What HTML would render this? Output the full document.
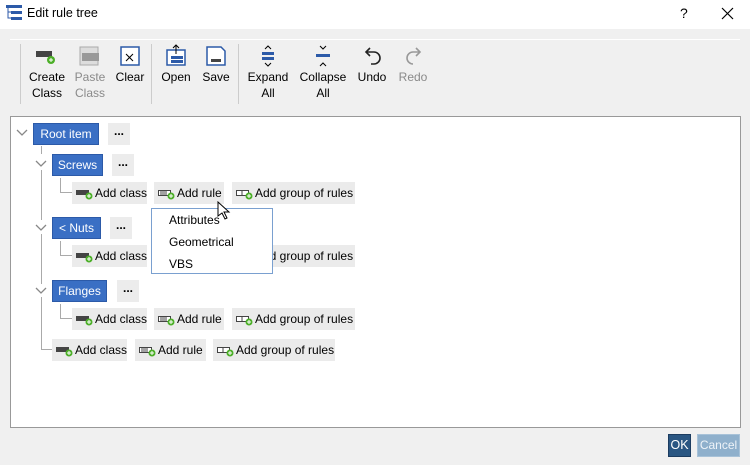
<!DOCTYPE html>
<html><head><style>
*{margin:0;padding:0;box-sizing:border-box}
body{width:750px;height:465px;background:#f0f0f0;font-family:"Liberation Sans",sans-serif;font-size:12px;color:#000;position:relative;overflow:hidden}
.a{position:absolute;white-space:nowrap}
.title{left:0;top:0;width:750px;height:29px;background:#fff}
.tb{text-align:center;font-size:12px;line-height:16px;width:50px;margin-left:-25px;top:69px}
.dis{color:#8a8a8a}
.sep{width:1px;background:#ccc;top:44px;height:60px}
.node{background:#3a6fc4;color:#fff;border:1px solid #2c5aa8;height:22px;line-height:20px;text-align:center;font-size:12px}
.dots{background:#ececec;height:22px;width:22px;text-align:center;line-height:16px;font-weight:bold}
.btn{background:#ebebeb;height:22px;line-height:22px;padding-left:23px;font-size:12px;overflow:hidden}
.btn svg{position:absolute;left:4px;top:6px}
.ln{border-left:1px solid #aaa;border-bottom:1px solid #aaa}
.vl{border-left:1px solid #aaa}
</style></head><body>
<div class="a title"></div>
<svg class="a" style="left:6px;top:5px" width="18" height="16"><rect x="0" y="0" width="16" height="3" fill="#2c5aa8"/><rect x="5" y="6" width="11" height="3" fill="#2c5aa8"/><rect x="5" y="12" width="11" height="3" fill="#2c5aa8"/><path d="M2 3v10h3M2 7h3" stroke="#2c5aa8" fill="none"/></svg>
<div class="a" style="left:27px;top:6px;font-size:12.5px">Edit rule tree</div>
<div class="a" style="left:680px;top:5px;font-size:14px">?</div>
<svg class="a" style="left:721px;top:7px" width="13" height="13"><path d="M1 1L12 12M12 1L1 12" stroke="#000" stroke-width="1.2"/></svg>
<div class="a" style="left:10px;top:39px;width:730px;height:1px;background:#fff"></div>
<div class="a sep" style="left:20px"></div>
<div class="a sep" style="left:151px"></div>
<div class="a sep" style="left:238px"></div>
<svg class="a" style="left:35px;top:49px" width="22" height="16"><rect x="1" y="2" width="16" height="6" fill="#444"/><circle cx="16" cy="11" r="4" fill="#4caf28"/><path d="M16 9v4M14 11h4" stroke="#fff"/></svg>
<svg class="a" style="left:79px;top:46px" width="22" height="20"><rect x="1" y="1" width="18" height="18" fill="#ddd" stroke="#aaa"/><rect x="3" y="7" width="17" height="8" fill="#999"/></svg>
<svg class="a" style="left:120px;top:46px" width="20" height="20"><rect x="1" y="1" width="18" height="18" fill="#fff" stroke="#2c5aa8" stroke-width="1.5"/><path d="M6 8l7 7M13 8l-7 7" stroke="#000"/></svg>
<svg class="a" style="left:166px;top:44px" width="20" height="22"><rect x="1" y="6" width="18" height="15" fill="#fff" stroke="#2c5aa8" stroke-width="1.5"/><path d="M10 1v9M7 4l3-3 3 3" stroke="#000" fill="none"/><rect x="5" y="12" width="12" height="3" fill="#2c5aa8"/><rect x="5" y="16" width="12" height="3" fill="#2c5aa8"/></svg>
<svg class="a" style="left:206px;top:46px" width="20" height="20"><path d="M1 1h14l4 4v14H1z" fill="#fff" stroke="#2c5aa8" stroke-width="1.5"/><rect x="5" y="13" width="10" height="3" fill="#444"/></svg>
<svg class="a" style="left:260px;top:45px" width="16" height="22"><path d="M5 4l3-3 3 3M5 18l3 3 3-3" stroke="#000" fill="none"/><rect x="2" y="7" width="12" height="3" fill="#2c5aa8"/><rect x="2" y="12" width="12" height="3" fill="#2c5aa8"/></svg>
<svg class="a" style="left:315px;top:45px" width="16" height="22"><path d="M5 1l3 3 3-3M5 21l3-3 3 3" stroke="#000" fill="none"/><rect x="1" y="9" width="14" height="3" fill="#2c5aa8"/></svg>
<svg class="a" style="left:362px;top:46px" width="20" height="20"><path d="M5 6h7a6 6 0 0 1 0 12h-3" stroke="#222" stroke-width="1.6" fill="none"/><path d="M8 2L4 6l4 4" stroke="#222" stroke-width="1.6" fill="none"/></svg>
<svg class="a" style="left:404px;top:46px" width="20" height="20"><path d="M15 6H9a6 6 0 0 0 0 12" stroke="#999" stroke-width="1.6" fill="none"/><path d="M12 2l4 4-4 4" stroke="#999" stroke-width="1.6" fill="none"/></svg>
<div class="a tb" style="left:47px">Create<br>Class</div>
<div class="a tb dis" style="left:90px">Paste<br>Class</div>
<div class="a tb" style="left:130px">Clear</div>
<div class="a tb" style="left:176px">Open</div>
<div class="a tb" style="left:216px">Save</div>
<div class="a tb" style="left:268px;width:60px;margin-left:-30px">Expand<br>All</div>
<div class="a tb" style="left:323px;width:60px;margin-left:-30px">Collapse<br>All</div>
<div class="a tb" style="left:372px">Undo</div>
<div class="a tb dis" style="left:413px">Redo</div>
<div class="a" style="left:10px;top:116px;width:731px;height:312px;background:#fff;border:1px solid #999"></div>
<svg class="a" style="left:16px;top:129px" width="12" height="8"><path d="M1 1l5 5 5-5" stroke="#888" fill="none" stroke-width="1.3"/></svg>
<svg class="a" style="left:35px;top:160px" width="12" height="8"><path d="M1 1l5 5 5-5" stroke="#888" fill="none" stroke-width="1.3"/></svg>
<svg class="a" style="left:35px;top:224px" width="12" height="8"><path d="M1 1l5 5 5-5" stroke="#888" fill="none" stroke-width="1.3"/></svg>
<svg class="a" style="left:35px;top:287px" width="12" height="8"><path d="M1 1l5 5 5-5" stroke="#888" fill="none" stroke-width="1.3"/></svg>
<div class="a vl" style="left:41px;top:146px;height:8px"></div>
<div class="a vl" style="left:41px;top:170px;height:50px"></div>
<div class="a vl" style="left:41px;top:234px;height:50px"></div>
<div class="a ln" style="left:41px;top:297px;width:11px;height:53px"></div>
<div class="a ln" style="left:60px;top:178px;width:12px;height:15px"></div>
<div class="a ln" style="left:60px;top:241px;width:12px;height:15px"></div>
<div class="a ln" style="left:60px;top:304px;width:12px;height:15px"></div>
<div class="a node" style="left:33px;top:123px;width:66px">Root item</div>
<div class="a dots" style="left:108px;top:123px">...</div>
<div class="a node" style="left:52px;top:154px;width:51px">Screws</div>
<div class="a dots" style="left:112px;top:154px">...</div>
<div class="a node" style="left:52px;top:217px;width:49px">&lt; Nuts</div>
<div class="a dots" style="left:110px;top:217px">...</div>
<div class="a node" style="left:52px;top:280px;width:55px">Flanges</div>
<div class="a dots" style="left:117px;top:280px">...</div>

<div class="a btn" style="left:72px;top:182px;width:75px"><svg width="18" height="12"><rect x="0" y="2" width="13" height="5" fill="#444"/><circle cx="13" cy="8" r="3.5" fill="#4caf28"/><path d="M13 6v4M11 8h4" stroke="#fff"/></svg>Add class</div>
<div class="a btn" style="left:154px;top:182px;width:70px"><svg width="18" height="12"><rect x="0.5" y="2.5" width="12" height="5" fill="#fff" stroke="#444"/><path d="M2 4h7M2 6h7" stroke="#444"/><circle cx="13" cy="8" r="3.5" fill="#4caf28"/><path d="M13 6v4M11 8h4" stroke="#fff"/></svg>Add rule</div>
<div class="a btn" style="left:232px;top:182px;width:123px"><svg width="18" height="12"><rect x="0.5" y="2.5" width="12" height="5" fill="#fff" stroke="#444"/><path d="M6 2v6" stroke="#444"/><circle cx="13" cy="8" r="3.5" fill="#4caf28"/><path d="M13 6v4M11 8h4" stroke="#fff"/></svg>Add group of rules</div>

<div class="a btn" style="left:72px;top:245px;width:75px"><svg width="18" height="12"><rect x="0" y="2" width="13" height="5" fill="#444"/><circle cx="13" cy="8" r="3.5" fill="#4caf28"/><path d="M13 6v4M11 8h4" stroke="#fff"/></svg>Add class</div>
<div class="a btn" style="left:232px;top:245px;width:123px"><svg width="18" height="12"><rect x="0.5" y="2.5" width="12" height="5" fill="#fff" stroke="#444"/><path d="M6 2v6" stroke="#444"/><circle cx="13" cy="8" r="3.5" fill="#4caf28"/><path d="M13 6v4M11 8h4" stroke="#fff"/></svg>Add group of rules</div>

<div class="a btn" style="left:72px;top:308px;width:75px"><svg width="18" height="12"><rect x="0" y="2" width="13" height="5" fill="#444"/><circle cx="13" cy="8" r="3.5" fill="#4caf28"/><path d="M13 6v4M11 8h4" stroke="#fff"/></svg>Add class</div>
<div class="a btn" style="left:154px;top:308px;width:70px"><svg width="18" height="12"><rect x="0.5" y="2.5" width="12" height="5" fill="#fff" stroke="#444"/><path d="M2 4h7M2 6h7" stroke="#444"/><circle cx="13" cy="8" r="3.5" fill="#4caf28"/><path d="M13 6v4M11 8h4" stroke="#fff"/></svg>Add rule</div>
<div class="a btn" style="left:232px;top:308px;width:123px"><svg width="18" height="12"><rect x="0.5" y="2.5" width="12" height="5" fill="#fff" stroke="#444"/><path d="M6 2v6" stroke="#444"/><circle cx="13" cy="8" r="3.5" fill="#4caf28"/><path d="M13 6v4M11 8h4" stroke="#fff"/></svg>Add group of rules</div>

<div class="a btn" style="left:52px;top:339px;width:75px"><svg width="18" height="12"><rect x="0" y="2" width="13" height="5" fill="#444"/><circle cx="13" cy="8" r="3.5" fill="#4caf28"/><path d="M13 6v4M11 8h4" stroke="#fff"/></svg>Add class</div>
<div class="a btn" style="left:135px;top:339px;width:71px"><svg width="18" height="12"><rect x="0.5" y="2.5" width="12" height="5" fill="#fff" stroke="#444"/><path d="M2 4h7M2 6h7" stroke="#444"/><circle cx="13" cy="8" r="3.5" fill="#4caf28"/><path d="M13 6v4M11 8h4" stroke="#fff"/></svg>Add rule</div>
<div class="a btn" style="left:213px;top:339px;width:122px"><svg width="18" height="12"><rect x="0.5" y="2.5" width="12" height="5" fill="#fff" stroke="#444"/><path d="M6 2v6" stroke="#444"/><circle cx="13" cy="8" r="3.5" fill="#4caf28"/><path d="M13 6v4M11 8h4" stroke="#fff"/></svg>Add group of rules</div>

<div class="a" style="left:151px;top:208px;width:122px;height:66px;background:#fff;border:1px solid #7aa0d0"></div>
<div class="a" style="left:169px;top:213px">Attributes</div>
<div class="a" style="left:169px;top:235px">Geometrical</div>
<div class="a" style="left:169px;top:257px">VBS</div>
<svg class="a" style="left:217px;top:201px" width="14" height="20"><path d="M1 1v14l4-3 3 6 2-1-3-6h5z" fill="#fff" stroke="#000"/></svg>

<div class="a" style="left:668px;top:434px;width:23px;height:23px;background:#2a5682;border:1px solid #1c3c60;color:#fff;text-align:center;line-height:21px;font-size:12.5px">OK</div>
<div class="a" style="left:697px;top:434px;width:43px;height:23px;background:#8fb0cc;border:1px solid #a8c2d8;color:#eef3f8;text-align:center;line-height:21px;font-size:12px">Cancel</div>
</body></html>
